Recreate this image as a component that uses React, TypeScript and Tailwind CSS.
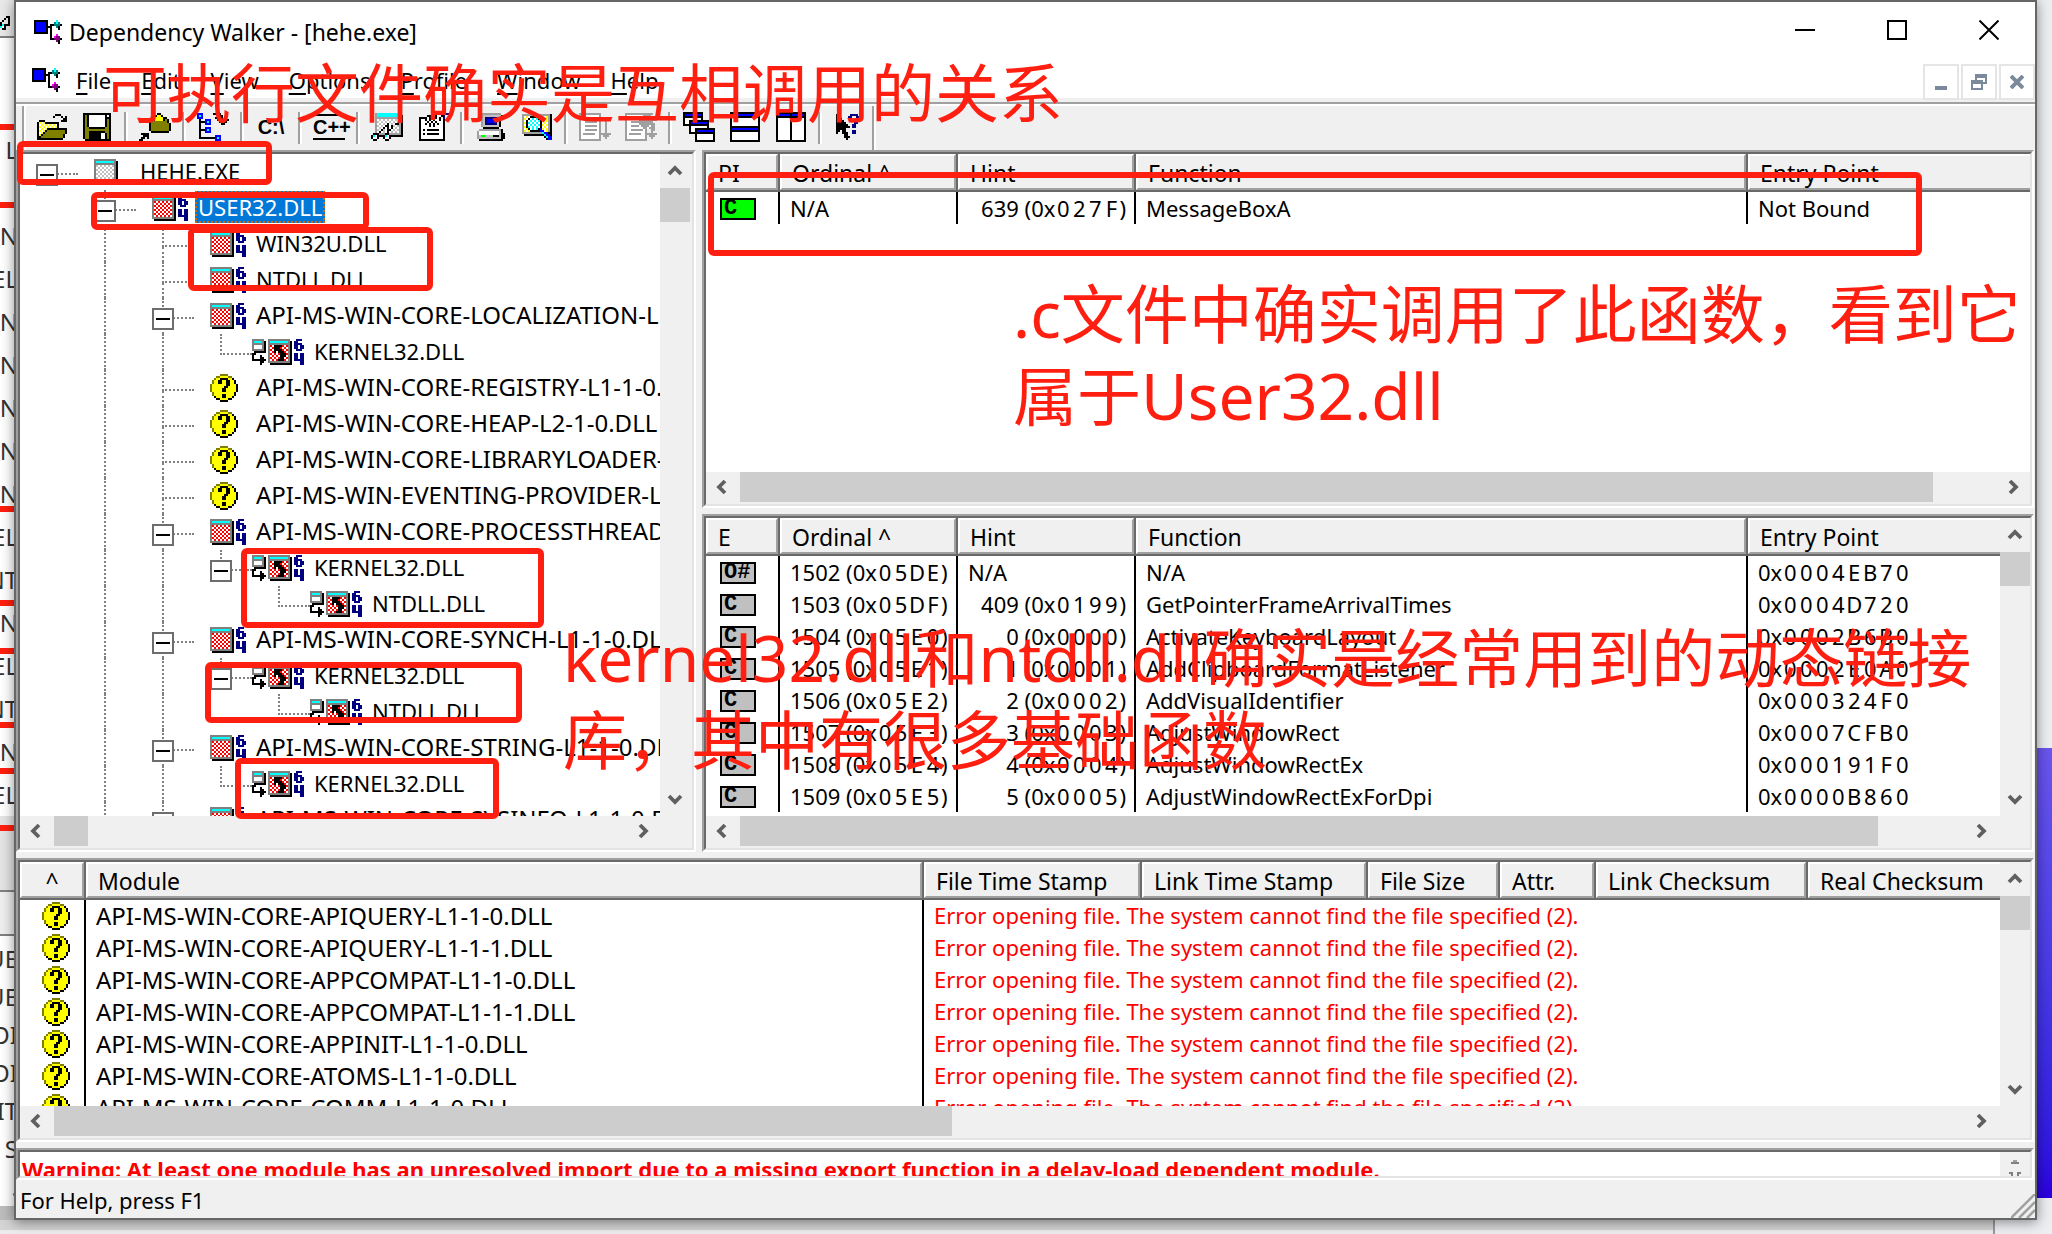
import type { ReactNode } from 'react';

const PALETTE: Record<string, string> = {
  k: '#000000', w: '#ffffff', g: '#808080', c: '#00ffff', r: '#ff0000', n: '#000080',
  b: '#0000ff', o: '#808000', y: '#ffff00', s: '#c0c0c0', d: '#a0a0a0', t: '#008080',
  p: '#800080', m: '#ff00ff', e: '#00ff00',
};

/** Pixel-art icon: every character is one 2x2 pixel in the palette colour. */
function Bitmap({ rows, label }: { rows: string[]; label?: string }) {
  const width = Math.max(...rows.map((r) => r.length));
  return (
    <svg width={width * 2} height={rows.length * 2} viewBox={`0 0 ${width} ${rows.length}`} shapeRendering="crispEdges" className="shrink-0" role={label ? 'img' : undefined} aria-label={label} aria-hidden={label ? undefined : true}>
      {rows.flatMap((row, y) =>
        [...row].map((ch, x) => (PALETTE[ch] ? <rect key={`${x}-${y}`} x={x} y={y} width={1} height={1} fill={PALETTE[ch]} /> : null)),
      )}
    </svg>
  );
}

const SIX_FOUR = ['.nnn.', 'nn...', 'nnnn.', 'nn.nn', 'nn.nn', '.nnn.', '.....', 'nn.nn', 'nn.nn', 'nn.nn', 'nnnnn', '...nn', '...nn'];
const boxOf = (a: string) => {
  const one = ('w' + a).repeat(5).slice(0, 9);
  const two = (a + 'w').repeat(5).slice(0, 9);
  return [
    'ggggggggggg.', 'gcccccccccgk', 'gggggggggggk',
    ...[0, 1, 2, 3, 4, 5, 6, 7].map((i) => `g${i % 2 ? one : two}gk`),
    'gggggggggggk', '.kkkkkkkkkkk',
  ];
};
const ICON_EXE = boxOf('s');
const ICON_DLL = boxOf('r').map((r, i) => `${r}.${SIX_FOUR[i]}`);
const FORWARD = ['gggggg..', 'gccccgk.', 'ggggggk.', 'gwwwwgk.', 'gwwwwgk.', 'ggggggk.', '.kkkkkk.', 'kk......', 'k...k...', 'k...kk..', 'kkkkkkk.', '....kk..', '....k...'];
const FORWARD_BOX = [
  'ggggggggggg.', 'gcccccccccgk', 'gggggggggggk', 'grwkkkkrwrgk', 'gwrkkkrwrwgk', 'grwkkkkrwrgk', 'gwrkwkkkrwgk',
  'grwrwrkkkrgk', 'gwrwrwkkkwgk', 'grwrwrkkwrgk', 'gwrwrkkkrwgk', 'gggggggggggk', '.kkkkkkkkkkk',
];
const ICON_FORWARD = FORWARD_BOX.map((r, i) => `${FORWARD[i]}${r}.${SIX_FOUR[i]}`);
const ICON_MISSING = [
  '.....oooo.....', '...ooyyyyoo...', '..oyykkkkyyk..', '.oyykkyykkyyk.', '.oyykkyykkyyk.', 'oyyyyyyykkyyyk', 'oyyyyyykkyyyyk',
  'oyyyyykkyyyyyk', 'oyyyyykkyyyyyk', '.oyyyyyyyyyyk.', '.oyyyykkyyyyk.', '..kyyykkyyyk..', '...kkyyyykk...', '.....kkkk.....',
];
const ICON_APP = [
  'kkkkkkk....c..', 'kbbbbbk...tct.', 'kbbbbbk.kktttk', 'kbbbbbkkk..tk.', 'kbbbbbk.k...k.', 'kbbbbbk.k.....', 'kkkkkkk.k.....',
  '........k..m..', '........k.mpp.', '........kkpppk', '...........pk.', '............k.',
];
const ICON_OPEN = [
  '..........kkk...', '.........k...k.k', '..............kk', '..kkk........kkk', '.kywykkkkkkk....', '.kwywywywywk....', '.kywywywywyk....',
  '.kwywykkkkkkkkkk', '.kywykoooooooook', '.kwykooooooooook', '.kykooooooooook.', '.kkoooooooooook.', '.kkkkkkkkkkkkk..',
];
const ICON_SAVE = [
  'kkkkkkkkkkkkkk', 'kokwwwwwwwwkwk', 'kokwwwwwwwwkkk', 'kokwwwwwwwwkok', 'kokwwwwwwwwkok', 'kokwwwwwwwwkok', 'kokwwwwwwwwkok',
  'kookkkkkkkkook', 'kooooooooooook', 'kookkkkkkkkook', 'kookkkkkkwwkok', 'kookkkkkkwwkok', 'kookkkkkkwwkok', '.kkkkkkkkkkkkk',
];
const ICON_PROPERTIES = [
  '.........kk.....', '........kyyk....', '......kkyyyykk..', '.....kokyyyykok.', '.....kooooooook.', '.....koooooooook', '.....koooooooook',
  '.....koooooooook', '.....koooooooook', '......kkkkkkkkk.', '.kkkk...........', '..kkk...........', '.kk.k...........', 'kk..............',
];
const ICON_TREE = [
  'bbb.....kkkk....', 'bcb........kk...', 'bbb......k..k.k.', '.k..bbb...kk.kkk', '.kkkbcb....kkkk.', '.k..bbb.....kk..', '.k..............',
  '.k..bbb.........', '.kkkbcb.........', '.k..bbb.........', '.k..............', '.k.......bbb....', '.kkkkkkkkbcb....', '.........bbb....',
];
const ICON_GLASSES = [
  '..dcccccccccccd.', '..dcccccccccccdk', '..dddddddddddddk', '..dwswswswswswdk', '..dswswswswswsdk', '..dwswswkwswkkdk', '..dswswkkwkswsdk', '..dwswkwkwkwswdk',
  '..dswkswkkwswsdk', '..dwkwswkwswswdk', '.kkkdddkkddddddk', 'kcwkkkkcwkkkkkkk', 'kwwk..kwwk......', '.kk....kk.......',
];
const ICON_CHECKLIST = [
  '..........kkkknn', '.....kk..kwwkn..', '.kkkkwkkkkwk.n..', '.kwwkwkwkwwkwk..', '.kwwwkwkwkwwwk..', '.kwwkwkwkwkwwk..', '.kwwwwkwkwwwwk..',
  '.kwwwwwwwwwwwk..', '.kwkwkkkkkkwwk..', '.kwwwwwwwwwwwk..', '.kwkwkkkkkkwwk..', '.kwwwwwwwwwwwk..', '.kwwwwwwwwwwwk..', '.kkkkkkkkkkkkk..',
];
const ICON_COMPUTER = [
  '..dddddddddd..', '..dsssssssssk.', '..dsnnnnnnsk..', '..dsnbbbbnsk..', '..dsnbbbbnsk..', '..dsnnnnnnsk..', '..dssssssssk..', '...kkkkkkkk...',
  '.dddddddddddk.', 'dwwwwwwwwwwsk.', 'dwwwwwwwwwwskk', 'dseesssskkkskk', 'dssssssssssskk', '.kkkkkkkkkkkk.',
];
const ICON_SEARCH = [
  'ddddddddddddddk', 'dwywkkkkywywydk', 'dywkwcwckwywydk', 'dwkwcwcwckywydk', 'dykcwcwcwkwywdk', 'dwkwcwcwckywydk', 'dykcwcwcwkwywdk',
  'dwykwcwckbywydk', 'dywykkkkkbbwydk', 'ddddddddddcbbkk', '.kkkkkkkkkkcbbk', '...........kcbb', '............kbb',
];
const ICON_EXPAND = [
  'ddddddddddd.....', 'dwwwwwwwwwd.....', 'dwddddddwwd.....', 'dwwwwwwwwwd.....', 'dwwddddddwd..d..', 'dwwwwwwwwwd..d..', 'dwwddddddwd..d..', 'dwwwwwwwwwd..d..',
  'dwwddddddwd..d..', 'dwwwwwwwwwd..d..', 'dwddddddwwdddddd', 'dwwwwwwwwwd.ddd.', 'dwwwwwwwwwd..d..', 'ddddddddddd.....',
];
const ICON_COLLAPSE = [
  'dddddddddddddd..', 'dwwwwwwwwdddd...', 'dwddddwwddddddd.', 'dwwwwwwddddddddd', 'dwwddddddddddd..', 'dwwwwwwdddddddd.', 'dwwddddwddddwdd.', 'dwwwwwwwwddwddd.',
  'dwwddddddwd..dd.', 'dwwwwwwwwwd..d..', 'dwddddddwwdddddd', 'dwwwwwwwwwd.ddd.', 'dwwwwwwwwwd..d..', 'ddddddddddd.....',
];
const ICON_CASCADE = [
  'kkkkkkkkkk......', 'kbbbbbbbbk......', 'kkkkkkkkkk......', 'kwwwwwwwwk......', 'kwwkkkkkkkkkk...', 'kwwkbbbbbbbbk...', 'kkkkkkkkkkkkk...', '...kwwwwwwwwk...',
  '...kwwkkkkkkkkkk', '...kwwkbbbbbbbbk', '...kkkkkkkkkkkkk', '......kwwwwwwwwk', '......kwwwwwwwwk', '......kwwwwwwwwk', '......kkkkkkkkkk',
];
const K15 = 'kkkkkkkkkkkkkkk', B15 = 'kbbbbbbbbbbbbbk', W15 = 'kwwwwwwwwwwwwwk', V15 = 'kwwwwwwkwwwwwwk';
const ICON_TILE_H = [K15, B15, K15, W15, W15, W15, W15, K15, B15, K15, W15, W15, W15, W15, K15];
const ICON_TILE_V = [K15, 'kbbbbbbkbbbbbbk', K15, V15, V15, V15, V15, V15, V15, V15, V15, V15, V15, V15, K15];
const ICON_HELP = [
  'k......nnnn..', 'kk....nn..nn.', 'kkk...nn..nn.', 'kkkk......nn.', 'kkkkk....nn..', 'kkkkkk..nn...', 'kkkkkkk.nn...', 'kkkkk........',
  'kk.kk...nn...', 'k..kkk..nn...', '....kk.......', '....kkk......', '.....k.......',
];

type Row = { name: string; level: number; icon: string[]; wide?: boolean; box?: boolean; last?: boolean; selected?: boolean };
const api = (name: string, box?: boolean): Row => ({ name: `API-MS-WIN-${name}.DLL`, level: 2, icon: box ? ICON_DLL : ICON_MISSING, box });
const forward = (name: string, level: number, box?: boolean): Row => ({ name, level, icon: ICON_FORWARD, wide: true, box, last: true });
const TREE: Row[] = [
  { name: 'HEHE.EXE', level: 0, icon: ICON_EXE, box: true, last: true },
  { name: 'USER32.DLL', level: 1, icon: ICON_DLL, box: true, selected: true },
  { name: 'WIN32U.DLL', level: 2, icon: ICON_DLL },
  { name: 'NTDLL.DLL', level: 2, icon: ICON_DLL },
  api('CORE-LOCALIZATION-L1-2-0', true),
  forward('KERNEL32.DLL', 3),
  api('CORE-REGISTRY-L1-1-0'),
  api('CORE-HEAP-L2-1-0'),
  api('CORE-LIBRARYLOADER-L1-2-0'),
  api('EVENTING-PROVIDER-L1-1-0'),
  api('CORE-PROCESSTHREADS-L1-1-0', true),
  forward('KERNEL32.DLL', 3, true),
  forward('NTDLL.DLL', 4),
  api('CORE-SYNCH-L1-1-0', true),
  forward('KERNEL32.DLL', 3, true),
  forward('NTDLL.DLL', 4),
  api('CORE-STRING-L1-1-0', true),
  forward('KERNEL32.DLL', 3),
  api('CORE-SYSINFO-L1-1-0', true),
];

function TreeRow({ row }: { row: Row }) {
  const guides = Array.from({ length: row.level }, (_, i) => i);
  const size = row.name.startsWith('API-') ? 'text-[24px]' : 'text-[22px]';
  return (
    <li role="treeitem" aria-selected={!!row.selected} aria-level={row.level + 1} className="flex h-9 items-center whitespace-nowrap">
      {guides.map((g) => (
        <span key={g} className="grid h-9 w-[58px] shrink-0 grid-cols-[26px_32px]">
          <span />
          <span className={g === 1 || g === 2 ? 'border-l-2 border-dotted border-[#808080]' : ''} />
        </span>
      ))}
      <span className="relative grid h-9 w-[58px] shrink-0 grid-cols-[26px_32px] grid-rows-[21px_15px]">
        <span />
        <span className={row.level ? 'border-b-2 border-l-2 border-dotted border-[#808080]' : 'border-b-2 border-dotted border-[#808080]'} />
        <span />
        <span className={row.last ? '' : 'border-l-2 border-dotted border-[#808080]'} />
        {row.box && (
          <button aria-label={`Collapse ${row.name}`} className="absolute top-[10px] left-4 flex size-[22px] items-center justify-center border-2 border-[#6d6d6d] bg-white">
            <span className="h-[2px] w-3.5 bg-black" />
          </button>
        )}
      </span>
      <span className={row.wide ? 'w-[59px] shrink-0' : 'w-[59px] shrink-0 pl-4'}><Bitmap rows={row.icon} /></span>
      <span className={`mb-[2px] px-[3px] leading-8 ${size} ${row.selected ? 'bg-[#0078d7] text-white outline-2 -outline-offset-2 outline-dotted outline-[#c96a12]' : ''}`}>{row.name}</span>
    </li>
  );
}

/* Scroll bars */
const CHEVRONS = { up: 'M2 11 8 5l6 6', down: 'M2 5l6 6 6-6', left: 'M10 2 4 8l6 6', right: 'M5 2l6 6-6 6' };
function ArrowButton({ dir, className }: { dir: keyof typeof CHEVRONS; className: string }) {
  return (
    <button aria-label={`Scroll ${dir}`} className={`flex shrink-0 items-center justify-center ${className}`}>
      <svg width="16" height="16" viewBox="0 0 16 16" fill="none" stroke="#606060" strokeWidth="3.8"><path d={CHEVRONS[dir]} /></svg>
    </button>
  );
}
function VScroll() {
  return (
    <div className="flex w-[30px] shrink-0 flex-col bg-[#f0f0f0]">
      <ArrowButton dir="up" className="h-[34px]" />
      <div className="flex-1"><div className="h-[34px] bg-[#cdcdcd]" /></div>
      <ArrowButton dir="down" className="h-[34px]" />
    </div>
  );
}
function HScroll({ thumb, corner }: { thumb: string; corner?: boolean }) {
  return (
    <div className="flex h-8 shrink-0 bg-[#f0f0f0] pb-[2px]">
      <ArrowButton dir="left" className="w-[34px]" />
      <div className="flex-1"><div className={`h-full bg-[#cdcdcd] ${thumb}`} /></div>
      <ArrowButton dir="right" className="w-[34px]" />
      {corner && <div className="w-8 shrink-0" />}
    </div>
  );
}

/* Sunken frame round each pane */
function Pane({ className, children }: { className: string; children: ReactNode }) {
  return (
    <section className={`flex min-h-0 min-w-0 border-2 border-t-[#a0a0a0] border-r-white border-b-white border-l-[#a0a0a0] ${className}`}>
      <div className="flex min-h-0 min-w-0 flex-1 flex-col border-2 border-t-[#696969] border-r-[#e3e3e3] border-b-[#e3e3e3] border-l-[#696969] bg-white">{children}</div>
    </section>
  );
}

/* Lists */
function Th({ children, first, last }: { children: ReactNode; first?: boolean; last?: boolean }) {
  return (
    <th scope="col" className={`h-[38px] border-b-2 border-b-[#696969] bg-[#f0f0f0] p-0 text-left font-normal whitespace-nowrap ${last ? '' : 'border-r-2 border-r-[#696969]'}`}>
      <div className={`flex h-9 items-center border-2 border-t-white border-b-[#a0a0a0] border-l-white pt-[2px] leading-[30px] ${last ? 'border-r-0' : 'border-r-[#a0a0a0]'} ${first ? 'justify-center' : 'pl-[10px]'}`}>{children}</div>
    </th>
  );
}
function Hex({ digits, close }: { digits: string; close?: boolean }) {
  return (
    <>
      {close && '('}0x
      {[...digits].map((d, i) => <span key={i} className="inline-block w-4 text-center">{d}</span>)}
      {close && ')'}
    </>
  );
}
function Badge({ text, green }: { text: string; green?: boolean }) {
  return (
    <span className={`mt-[2px] flex h-[22px] w-9 items-center border-2 border-black pl-[2px] font-['Liberation_Mono'] text-[22px] leading-none font-bold ${green ? 'bg-[#00ff00]' : 'bg-[#c0c0c0]'}`}>{text}</span>
  );
}
type Fn = { badge: string; green?: boolean; ord?: [string, string]; hint?: [string, string]; name: string; entry?: string };
function FunctionTable({ label, first, rows }: { label: string; first: string; rows: Fn[] }) {
  const line = 'h-8 border-r-2 border-black p-0 pl-[10px]';
  return (
    <table aria-label={label} className="w-full table-fixed border-separate border-spacing-0 text-[22px] leading-8 whitespace-nowrap">
      <colgroup><col className="w-[74px]" /><col className="w-[178px]" /><col className="w-[178px]" /><col className="w-[612px]" /><col /></colgroup>
      <thead className="text-[23px]"><tr><Th>{first}</Th><Th>Ordinal ^</Th><Th>Hint</Th><Th>Function</Th><Th last>Entry Point</Th></tr></thead>
      <tbody>
        {rows.map((r) => (
          <tr key={r.name}>
            <td className="h-8 border-r-2 border-black p-0 pl-[14px]"><Badge text={r.badge} green={r.green} /></td>
            <td className={line}>{r.ord ? <>{r.ord[0]} <Hex digits={r.ord[1]} close /></> : 'N/A'}</td>
            <td className={r.hint ? 'h-8 border-r-2 border-black p-0 pr-2 text-right' : line}>{r.hint ? <>{r.hint[0]} <Hex digits={r.hint[1]} close /></> : 'N/A'}</td>
            <td className={line}>{r.name}</td>
            <td className="p-0 pl-[10px]">{r.entry ? <Hex digits={r.entry} /> : 'Not Bound'}</td>
          </tr>
        ))}
      </tbody>
    </table>
  );
}
const IMPORTS: Fn[] = [{ badge: 'C', green: true, hint: ['639', '027F'], name: 'MessageBoxA' }];
const EXPORTS: Fn[] = [
  { badge: 'O#', ord: ['1502', '05DE'], name: 'N/A', entry: '0004EB70' },
  { badge: 'C', ord: ['1503', '05DF'], hint: ['409', '0199'], name: 'GetPointerFrameArrivalTimes', entry: '0004D720' },
  { badge: 'C', ord: ['1504', '05E0'], hint: ['0', '0000'], name: 'ActivateKeyboardLayout', entry: '0002B6B0' },
  { badge: 'C', ord: ['1505', '05E1'], hint: ['1', '0001'], name: 'AddClipboardFormatListener', entry: '0002E0A0' },
  { badge: 'C', ord: ['1506', '05E2'], hint: ['2', '0002'], name: 'AddVisualIdentifier', entry: '000324F0' },
  { badge: 'C', ord: ['1507', '05E3'], hint: ['3', '0003'], name: 'AdjustWindowRect', entry: '0007CFB0' },
  { badge: 'C', ord: ['1508', '05E4'], hint: ['4', '0004'], name: 'AdjustWindowRectEx', entry: '000191F0' },
  { badge: 'C', ord: ['1509', '05E5'], hint: ['5', '0005'], name: 'AdjustWindowRectExForDpi', entry: '0000B860' },
];
const MODULES = ['APIQUERY-L1-1-0', 'APIQUERY-L1-1-1', 'APPCOMPAT-L1-1-0', 'APPCOMPAT-L1-1-1', 'APPINIT-L1-1-0', 'ATOMS-L1-1-0', 'COMM-L1-1-0'];

function ModuleTable() {
  return (
    <table aria-label="Modules" className="w-full table-fixed border-separate border-spacing-0 leading-8 whitespace-nowrap">
      <colgroup>
        <col className="w-[66px]" /><col className="w-[838px]" /><col className="w-[218px]" /><col className="w-[226px]" /><col className="w-[132px]" /><col className="w-24" /><col className="w-[212px]" /><col />
      </colgroup>
      <thead className="text-[23px]">
        <tr><Th first>^</Th><Th>Module</Th><Th>File Time Stamp</Th><Th>Link Time Stamp</Th><Th>File Size</Th><Th>Attr.</Th><Th>Link Checksum</Th><Th last>Real Checksum</Th></tr>
      </thead>
      <tbody>
        {MODULES.map((m) => (
          <tr key={m}>
            <td className="h-8 border-r-2 border-black p-0 pl-[22px]"><Bitmap rows={ICON_MISSING} label="Missing module" /></td>
            <td className="border-r-2 border-black p-0 pl-[10px] text-[24px]">API-MS-WIN-CORE-{m}.DLL</td>
            <td colSpan={6} className="p-0 pb-[2px] pl-[10px] text-[22px] leading-[30px] text-[#ff0000]">Error opening file. The system cannot find the file specified (2).</td>
          </tr>
        ))}
      </tbody>
    </table>
  );
}

/* Toolbar */
type Tool = { label: string; icon?: string[]; text?: string; lined?: boolean };
const TOOLS: Tool[][] = [
  [{ label: 'Open', icon: ICON_OPEN }, { label: 'Save', icon: ICON_SAVE }],
  [{ label: 'Properties', icon: ICON_PROPERTIES }],
  [{ label: 'Auto expand', icon: ICON_TREE }],
  [{ label: 'Full paths', text: 'C:\\' }],
  [{ label: 'Undecorate functions', text: 'C++', lined: true }],
  [{ label: 'View module', icon: ICON_GLASSES }, { label: 'Module properties', icon: ICON_CHECKLIST }],
  [{ label: 'System information', icon: ICON_COMPUTER }, { label: 'Search order', icon: ICON_SEARCH }],
  [{ label: 'Start profiling', icon: ICON_EXPAND }, { label: 'Stop profiling', icon: ICON_COLLAPSE }],
  [{ label: 'Cascade', icon: ICON_CASCADE }, { label: 'Tile horizontally', icon: ICON_TILE_H }, { label: 'Tile vertically', icon: ICON_TILE_V }],
  [{ label: 'Help', icon: ICON_HELP }],
];
const MENUS: [string, string][] = [['F', 'ile'], ['E', 'dit'], ['V', 'iew'], ['O', 'ptions'], ['P', 'rofile'], ['W', 'indow'], ['H', 'elp']];

/* Fragments of the windows behind the main one */
const BEHIND_TOP = ['L', '', 'N', 'EL', 'N', 'N', 'N', 'N', 'N', 'EL', 'NT', 'N', 'EL', 'NT', 'N', 'EL'];
const BEHIND_LOW = ['UE', 'UE', 'OI', 'OI', 'IT', 'S', '.'];

function Behind() {
  const red = 'absolute left-0 h-1.5 w-full bg-[#ff1f10]';
  return (
    <aside aria-hidden="true" className="relative flex w-3.5 shrink-0 flex-col overflow-hidden bg-white text-[24px] text-[#333]">
      <div className="flex h-9 shrink-0 items-end bg-[#e8e8e8] pb-1.5"><Bitmap rows={['...kk', '..k.k', '.k..k', 'k...k', 'kckkk', 'cwk..', '.kk..']} /></div>
      <div className="h-[92px] shrink-0 border-t-2 border-[#808080]" />
      {BEHIND_TOP.map((t, i) => <div key={i} className="-mr-1 flex h-[43px] shrink-0 items-center justify-end">{t}</div>)}
      <div className="h-[74px] shrink-0 bg-[#e4e4e4]" />
      <div className="h-[46px] shrink-0 border-y-2 border-[#808080] bg-[#eee]" />
      <div className="h-1 shrink-0" />
      {BEHIND_LOW.map((t, i) => <div key={i} className="-mr-1 flex h-[38px] shrink-0 items-center justify-end">{t}</div>)}
      <div className="flex-1 bg-[#bdbdbd]" />
      <span className={`${red} top-[124px]`} />
      <span className={`${red} top-[202px]`} />
      <span className={`${red} top-[506px]`} />
      <span className={`${red} top-[600px]`} />
      <span className={`${red} top-[648px]`} />
      <span className={`${red} top-[722px]`} />
      <span className={`${red} top-[768px]`} />
      <span className={`${red} top-[825px]`} />
    </aside>
  );
}

const FRAME = 'pointer-events-none absolute rounded-md border-[6px] border-[#ff1f10]';
const NOTE = 'absolute text-[64px] leading-[82px] whitespace-nowrap text-[#ff1f10]';

export default function App() {
  return (
    <div className="relative flex h-screen w-full flex-col overflow-hidden bg-[#dedede] font-['Noto_Sans','Noto_Sans_CJK_SC',sans-serif] text-black">
      <div className="flex min-h-0 flex-1">
        <Behind />
        <main className="z-10 flex min-w-0 flex-1 flex-col border-2 border-[#666] bg-[#f0f0f0] shadow-[0_2px_12px_rgba(0,0,0,0.45)]">
          <header className="flex h-[60px] shrink-0 items-center bg-white">
            <span className="ml-[18px]"><Bitmap rows={ICON_APP} label="Dependency Walker" /></span>
            <h1 className="ml-[7px] flex-1 text-[23px]">Dependency Walker - [hehe.exe]</h1>
            <button aria-label="Minimize" className="flex h-14 w-[92px] items-center justify-center self-start"><span className="h-[2px] w-5 bg-black" /></button>
            <button aria-label="Maximize" className="flex h-14 w-[92px] items-center justify-center self-start"><span className="size-5 border-2 border-black" /></button>
            <button aria-label="Close" className="flex h-14 w-[92px] items-center justify-center self-start">
              <svg width="20" height="20" viewBox="0 0 20 20" stroke="#000" strokeWidth="2"><path d="M0.5 0.5l19 19M19.5 0.5l-19 19" /></svg>
            </button>
          </header>

          <nav aria-label="Menu" className="flex h-9 shrink-0 items-center bg-white text-[22px]">
            <span className="ml-4 w-7"><Bitmap rows={ICON_APP} /></span>
            <div className="flex flex-1 gap-[30px] pl-4">
              {MENUS.map(([k, rest]) => (
                <button key={k} className="leading-9"><span className="underline decoration-2 underline-offset-4">{k}</span>{rest}</button>
              ))}
            </div>
            <div className="mt-1 flex gap-[2px]">
              <button aria-label="Minimize document" className="flex size-9 items-center justify-center border-2 border-[#e5e5e5] bg-white"><span className="mt-3 h-1 w-3 bg-[#7a8a9a]" /></button>
              <button aria-label="Restore document" className="flex size-9 items-center justify-center border-2 border-[#e5e5e5] bg-white">
                <svg width="16" height="16" viewBox="0 0 8 8" fill="#7a8a9a" shapeRendering="crispEdges"><path d="M2 0h6v5H6V4h1V2H3v1H2zM0 3h6v5H0zm1 2v2h4V5z" fillRule="evenodd" /></svg>
              </button>
              <button aria-label="Close document" className="flex size-9 items-center justify-center border-2 border-[#e5e5e5] bg-white">
                <svg width="14" height="14" viewBox="0 0 14 14" stroke="#7a8a9a" strokeWidth="4"><path d="M1 1l12 12M13 1L1 13" /></svg>
              </button>
            </div>
          </nav>

          <div role="toolbar" aria-label="Toolbar" className="mt-1 flex h-12 shrink-0 border-t-2 border-[#a0a0a0]">
            <div className="flex items-center border-t-2 border-white pl-1.5">
              <div className="mr-[2px] h-full w-1 border-r-2 border-l-2 border-l-[#a0a0a0] border-r-white" />
              {TOOLS.map((group, g) => (
                <div key={g} className="flex items-center">
                  {g > 0 && <div className="mx-1 h-8 w-1 border-r-2 border-l-2 border-l-[#a0a0a0] border-r-white" />}
                  {group.map((t) => (
                    <button key={t.label} aria-label={t.icon ? t.label : undefined} title={t.label} className="flex h-11 w-[46px] items-center justify-center pb-[2px]">
                      {t.icon ? <Bitmap rows={t.icon} /> : (
                        <span className={`w-8 text-center font-['Liberation_Sans'] text-[20px] leading-[22px] font-bold ${t.lined ? 'border-y-2 border-black' : ''}`}>{t.text}</span>
                      )}
                    </button>
                  ))}
                </div>
              ))}
              <div className="h-full w-1 border-r-2 border-l-2 border-l-[#a0a0a0] border-r-white" />
            </div>
            <div className="flex-1 border-t-2 border-white" />
          </div>

          <div className="flex min-h-0 flex-1 flex-col gap-1.5 pr-px">
            <div className="flex min-h-0 flex-1 gap-1.5">
              <Pane className="w-[680px] shrink-0">
                <div className="flex min-h-0 flex-1">
                  <ul role="tree" aria-label="Module dependency tree" className="min-w-0 flex-1 overflow-hidden">
                    {TREE.map((row, i) => <TreeRow key={i} row={row} />)}
                  </ul>
                  <VScroll />
                  <div className="w-[2px] bg-[#f0f0f0]" />
                </div>
                <HScroll thumb="w-[34px]" corner />
              </Pane>
              <div className="flex min-w-0 flex-1 flex-col gap-1.5">
                <Pane className="flex-[358]">
                  <div className="min-h-0 flex-1 overflow-hidden"><FunctionTable label="Parent imports" first="PI" rows={IMPORTS} /></div>
                  <HScroll thumb="w-[95%]" />
                </Pane>
                <Pane className="flex-[338]">
                  <div className="flex min-h-0 flex-1">
                    <div className="min-w-0 flex-1 overflow-hidden"><FunctionTable label="Exports" first="E" rows={EXPORTS} /></div>
                    <VScroll />
                  </div>
                  <HScroll thumb="w-[93%]" corner />
                </Pane>
              </div>
            </div>
            <Pane className="h-[284px] shrink-0">
              <div className="flex min-h-0 flex-1">
                <div className="min-w-0 flex-1 overflow-hidden"><ModuleTable /></div>
                <VScroll />
              </div>
              <HScroll thumb="w-[47%]" corner />
            </Pane>
            <Pane className="h-8 shrink-0">
              <div className="flex h-6 overflow-hidden">
                <p className="flex-1 pl-[2px] text-[22px] leading-[34px] font-bold whitespace-nowrap text-[#ff0000]">
                  Warning: At least one module has an unresolved import due to a missing export function in a delay-load dependent module.
                </p>
                <div className="flex w-[30px] flex-col items-center justify-between bg-[#f0f0f0] pt-2">
                  <Bitmap rows={['.dd.', 'gggg']} /><Bitmap rows={['gg..gg', '.g..g.']} />
                </div>
              </div>
            </Pane>
          </div>

          <footer className="flex h-[38px] shrink-0 items-center pl-1 text-[22px]">
            <span className="flex-1 pt-[2px]">For Help, press F1</span>
            <svg width="24" height="24" viewBox="0 0 24 24" stroke="#a0a0a0" strokeWidth="2.5" className="self-end"><path d="M0 24L24 0M8 24L24 8M16 24l8-8" /></svg>
          </footer>
        </main>
        <aside aria-hidden="true" className="flex w-[15px] shrink-0 flex-col">
          <div className="flex-[748] bg-[#eceff1]" />
          <div className="flex-[450] bg-linear-to-b from-[#6a55ee] to-[#2b00e0]" />
          <div className="flex-[22] bg-[#eceef2]" />
        </aside>
      </div>
      <div aria-hidden="true" className="flex h-3.5 shrink-0">
        <div className="flex-[1995] border-b-4 border-[#ececec] bg-[#d4d4d4]" />
        <div className="flex-[57] border-l-2 border-[#999] bg-[#eceef2]" />
      </div>

      <div className="pointer-events-none absolute inset-0 z-20">
        <div className={`${FRAME} top-[141px] left-[17px] h-[44px] w-[255px]`} />
        <div className={`${FRAME} top-[192px] left-[91px] h-[38px] w-[278px]`} />
        <div className={`${FRAME} top-[227px] left-[188px] h-[64px] w-[245px]`} />
        <div className={`${FRAME} top-[548px] left-[241px] h-[80px] w-[303px]`} />
        <div className={`${FRAME} top-[662px] left-[205px] h-[61px] w-[317px]`} />
        <div className={`${FRAME} top-[758px] left-[235px] h-[61px] w-[264px]`} />
        <div className={`${FRAME} top-[172px] left-[708px] h-[84px] w-[1214px]`} />
        <p className={`${NOTE} top-[52px] left-[103px]`}>可执行文件确实是互相调用的关系</p>
        <p className={`${NOTE} top-[273px] left-[1013px]`}>.c文件中确实调用了此函数，看到它<br />属于User32.dll</p>
        <p className={`${NOTE} top-[617px] left-[563px]`}>kernel32.dll和ntdll.dll确实是经常用到的动态链接<br />库，其中有很多基础函数</p>
      </div>
    </div>
  );
}
